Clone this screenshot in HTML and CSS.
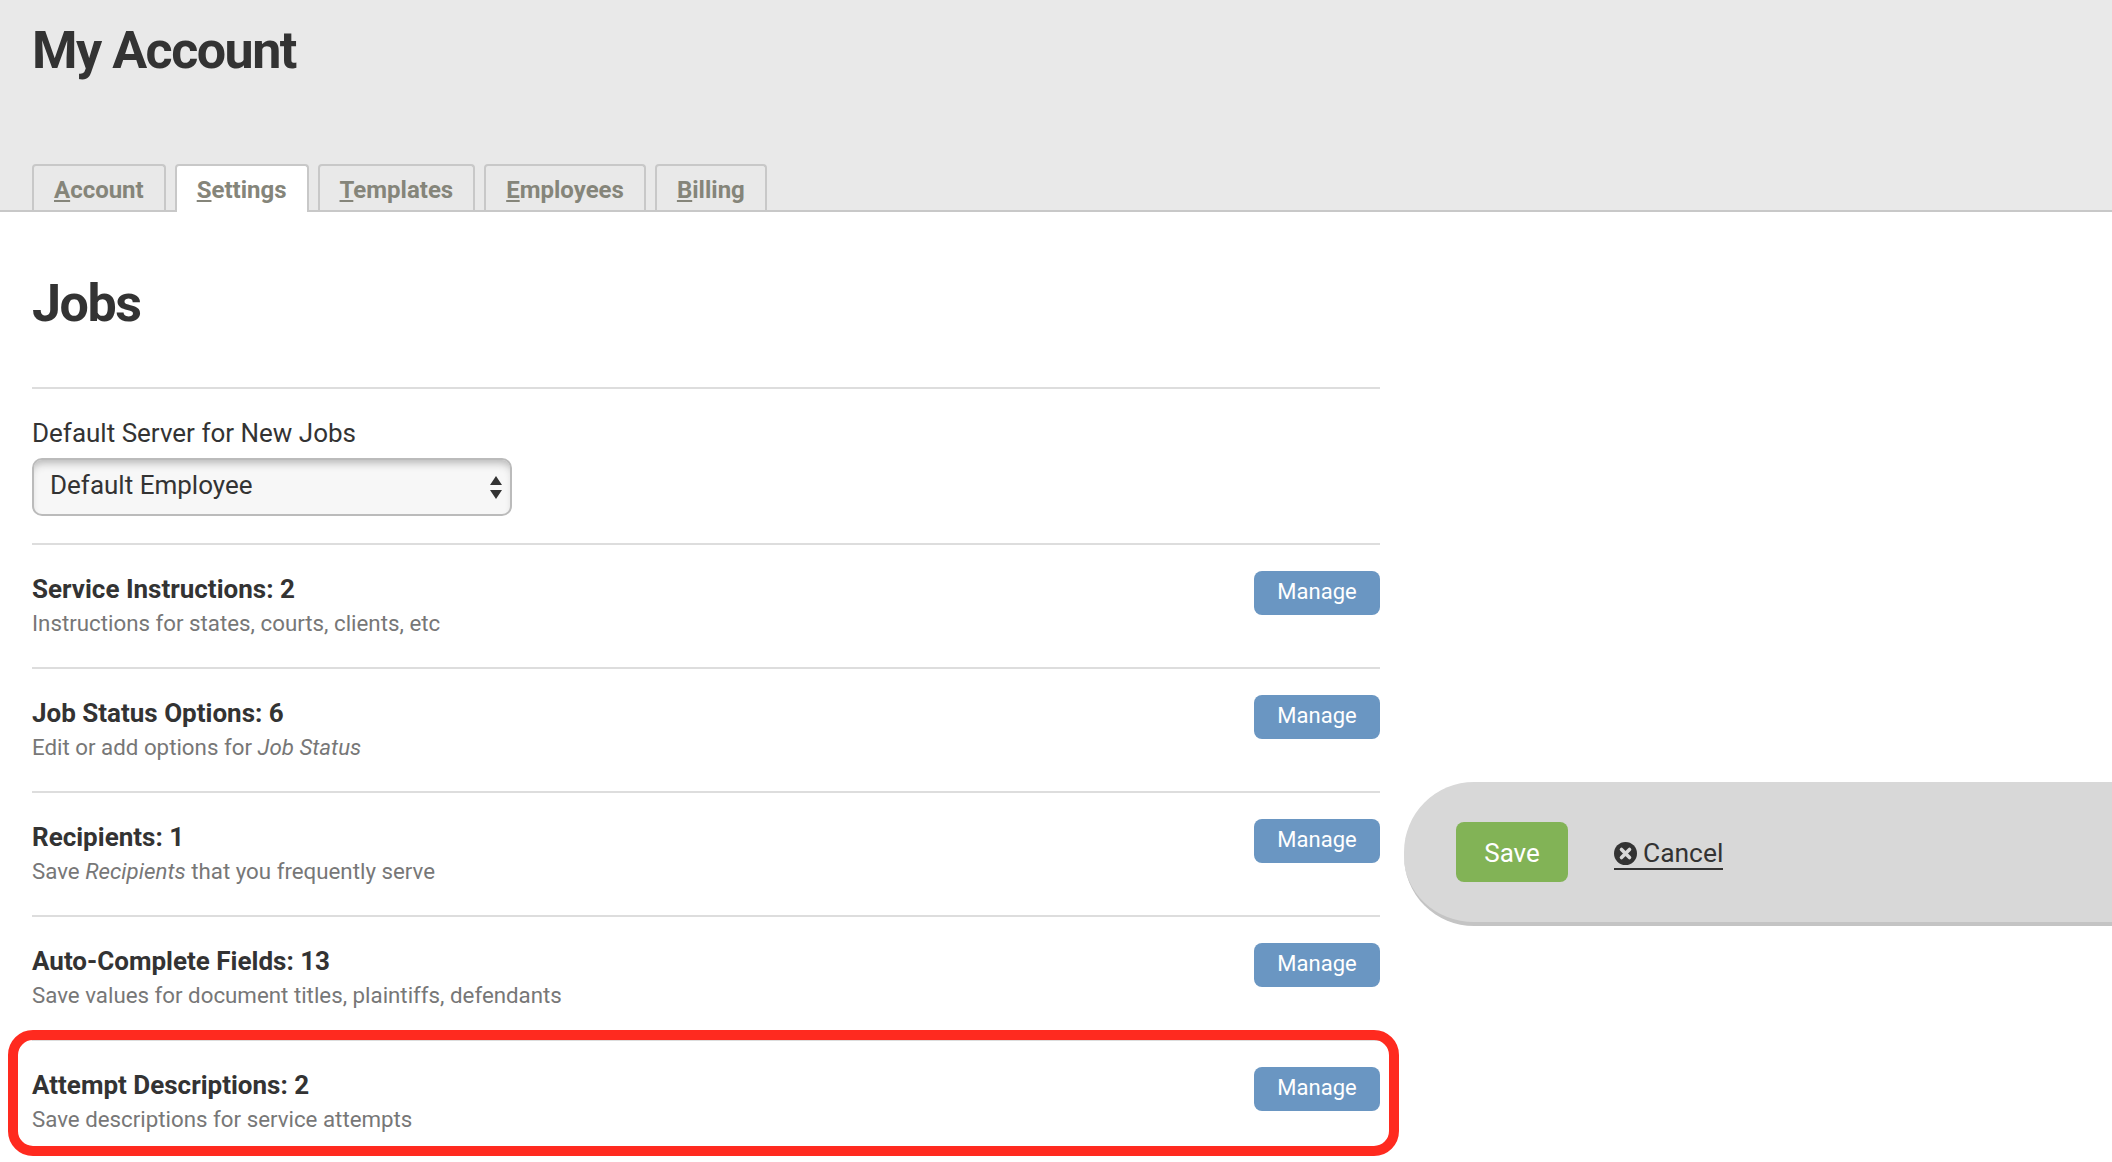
FILE: index.html
```html
<!DOCTYPE html>
<html lang="en">
<head>
<meta charset="utf-8">
<title>My Account</title>
<link rel="stylesheet" href="styles.css">
</head>
<body>
<header class="top">
  <h1 class="top-title">My Account</h1>
  <nav class="tabs">
    <a class="tab"><u>A</u>ccount</a>
    <a class="tab tab-active"><u>S</u>ettings</a>
    <a class="tab"><u>T</u>emplates</a>
    <a class="tab"><u>E</u>mployees</a>
    <a class="tab"><u>B</u>illing</a>
  </nav>
</header>
<main class="content">
  <h2 class="section-title">Jobs</h2>
  <section class="field">
    <label class="field-label" for="srv">Default Server for New Jobs</label>
    <div class="select-wrap">
      <select class="select" id="srv"><option>Default Employee</option></select>
      <svg class="select-arrows" width="12" height="23" viewBox="0 0 12 23"><path d="M6 0 12 9H0Z M0 14H12L6 23Z" fill="#333"/></svg>
    </div>
  </section>
  <section class="row">
    <div><div class="row-title">Service Instructions: 2</div><div class="row-sub">Instructions for states, courts, clients, etc</div></div>
    <a class="manage">Manage</a>
  </section>
  <section class="row">
    <div><div class="row-title">Job Status Options: 6</div><div class="row-sub">Edit or add options for <em>Job Status</em></div></div>
    <a class="manage">Manage</a>
  </section>
  <section class="row">
    <div><div class="row-title">Recipients: 1</div><div class="row-sub">Save <em>Recipients</em> that you frequently serve</div></div>
    <a class="manage">Manage</a>
  </section>
  <section class="row">
    <div><div class="row-title">Auto-Complete Fields: 13</div><div class="row-sub">Save values for document titles, plaintiffs, defendants</div></div>
    <a class="manage">Manage</a>
  </section>
  <section class="row row-marked">
    <div><div class="row-title">Attempt Descriptions: 2</div><div class="row-sub">Save descriptions for service attempts</div></div>
    <a class="manage">Manage</a>
    <div class="highlight"></div>
  </section>
</main>
<aside class="save-bar">
  <a class="save">Save</a>
  <a class="cancel">
    <svg class="cancel-icon" width="23" height="23" viewBox="0 0 23 23"><circle cx="11.5" cy="11.5" r="11.5" fill="#333"/><path d="M7.5 7.5 15.5 15.5M15.5 7.5 7.5 15.5" stroke="#d8d8d8" stroke-width="3.6" stroke-linecap="round"/></svg>
    <span>Cancel</span>
  </a>
</aside>
</body>
</html>
```
FILE: styles.css
```css
* { box-sizing: border-box; }
html, body { margin: 0; padding: 0; }
body {
  width: 2112px;
  height: 1162px;
  overflow: hidden;
  position: relative;
  background: #fff;
  color: #333;
  font-family: Roboto, "Liberation Sans", sans-serif;
}
.top {
  height: 212px;
  background: #e9e9e9;
  border-bottom: 2px solid #c8c8c8;
  padding: 0 32px;
  display: flex;
  flex-direction: column;
  justify-content: space-between;
}
.top-title {
  margin: 21px 0 0;
  font-size: 52px;
  line-height: 60px;
  font-weight: 700;
  letter-spacing: -1.5px;
}
.tabs { display: flex; gap: 9px; margin-bottom: -2px; }
.tab {
  height: 48px;
  padding: 0 20px;
  border: 2px solid #c8c8c8;
  border-bottom: 0;
  border-radius: 4px 4px 0 0;
  font-size: 24px;
  font-weight: 700;
  line-height: 48px;
  color: #85857a;
}
.tab-active { background: #fff; }
.content { width: 1380px; padding-left: 32px; }
.section-title {
  margin: 0;
  height: 175px;
  padding-top: 62px;
  font-size: 52px;
  line-height: 60px;
  font-weight: 700;
  letter-spacing: -1.5px;
}
.field { height: 156px; border-top: 2px solid #ddd; padding-top: 27px; }
.field-label { display: block; font-size: 26px; line-height: 34px; }
.select-wrap { position: relative; width: 480px; height: 58px; margin-top: 8px; }
.select {
  appearance: none;
  width: 100%;
  height: 100%;
  padding: 0 16px 4px;
  border: 2px solid #bbb;
  border-radius: 10px;
  background: #f7f7f7;
  box-shadow: inset 0 7px 8px -4px #b5b5b5;
  color: #333;
  font: 400 26px Roboto, "Liberation Sans", sans-serif;
}
.select-arrows { position: absolute; right: 10px; top: 18px; }
.row {
  position: relative;
  height: 124px;
  border-top: 2px solid #ddd;
  padding-top: 27px;
  display: flex;
  justify-content: space-between;
  align-items: flex-start;
}
.row-title { font-size: 26px; line-height: 34px; font-weight: 700; }
.row-sub { font-size: 22.3px; line-height: 34px; color: #777; }
.manage {
  width: 126px;
  height: 44px;
  margin-top: -1px;
  background: #6a96c2;
  border-radius: 8px;
  color: #fff;
  font-size: 22px;
  line-height: 41px;
  text-align: center;
}
.highlight {
  position: absolute;
  left: -24px;
  right: -19px;
  top: -11px;
  height: 126px;
  border: 10px solid #ff2a1f;
  border-radius: 25px;
}
.save-bar {
  position: fixed;
  left: 1404px;
  right: 0;
  top: 782px;
  height: 144px;
  background: #d8d8d8;
  border-bottom: 4px solid #c4c4c4;
  border-radius: 70px 0 0 70px;
  padding: 40px 0 0 52px;
  display: flex;
  align-items: flex-start;
  gap: 46px;
}
.save {
  width: 112px;
  height: 60px;
  background: #82b356;
  border-radius: 8px;
  color: #fff;
  font-size: 26px;
  line-height: 62px;
  text-align: center;
}
.cancel {
  display: flex;
  align-items: center;
  gap: 6px;
  height: 32px;
  margin-top: 16px;
  border-bottom: 2px solid #333;
  font-size: 26.4px;
}
```
